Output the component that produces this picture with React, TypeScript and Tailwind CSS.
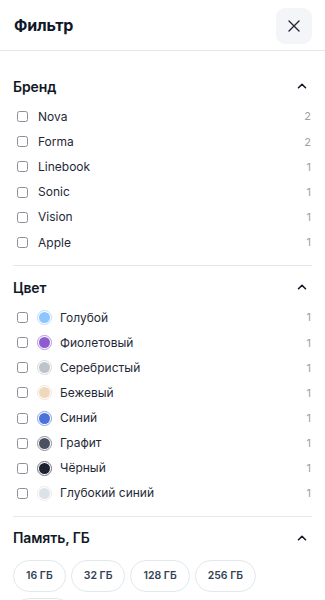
import React from "react";

const brands = [
  { name: "Nova", count: 2 },
  { name: "Forma", count: 2 },
  { name: "Linebook", count: 1 },
  { name: "Sonic", count: 1 },
  { name: "Vision", count: 1 },
  { name: "Apple", count: 1 },
];

const colors = [
  { name: "Голубой", fill: "bg-[#8ec5fc]", ring: "border-[#b9dcfd]" },
  { name: "Фиолетовый", fill: "bg-[#8e5bd0]", ring: "border-[#b594e2]" },
  { name: "Серебристый", fill: "bg-[#bfc4cc]", ring: "border-[#d6d9de]" },
  { name: "Бежевый", fill: "bg-[#eed9bc]", ring: "border-[#f3e5d2]" },
  { name: "Синий", fill: "bg-[#4a72d9]", ring: "border-[#8aa3e6]" },
  { name: "Графит", fill: "bg-[#4b5160]", ring: "border-[#8c909a]" },
  { name: "Чёрный", fill: "bg-[#1d2130]", ring: "border-[#6f7280]" },
  { name: "Глубокий синий", fill: "bg-[#dde1e8]", ring: "border-[#e8ebef]" },
];

const memory = ["16 ГБ", "32 ГБ", "128 ГБ", "256 ГБ", "512 ГБ"];

function Chevron() {
  return (
    <svg width="12" height="12" viewBox="0 0 12 12" fill="none" className="text-[#111827]">
      <path d="M2.5 7.75L6 4.25L9.5 7.75" stroke="currentColor" strokeWidth="1.6" strokeLinecap="round" strokeLinejoin="round" />
    </svg>
  );
}

function Checkbox() {
  return <span className="block w-[11px] h-[11px] rounded-[2.5px] border border-[#8b8f97] bg-white shrink-0" />;
}

function Heading({ title }: { title: string }) {
  return (
    <div className="flex items-center justify-between h-[28px]">
      <span className="text-[14px] font-semibold text-[#111827] tracking-[-0.1px]">{title}</span>
      <span className="mr-[4px]"><Chevron /></span>
    </div>
  );
}

export default function App() {
  return (
    <div
      className="w-[325px] h-[600px] overflow-hidden bg-white"
      style={{ fontFamily: "Inter, 'Noto Sans', sans-serif" }}
    >
      <div className="flex items-center justify-between h-[51px] px-[13px] border-b border-[#e3e8ee]">
        <span className="text-[16px] font-bold text-[#0f172a] tracking-[-0.2px] ml-[1px]">Фильтр</span>
        <button className="w-[36px] h-[36px] rounded-[9px] bg-[#f3f5f8] flex items-center justify-center mt-[1px]">
          <svg width="14" height="14" viewBox="0 0 14 14" fill="none">
            <path d="M2 2L12 12M12 2L2 12" stroke="#1f2937" strokeWidth="1.4" strokeLinecap="round" />
          </svg>
        </button>
      </div>

      <div className="px-[13px]">
        <div className="pt-[21px] pb-[10px] border-b border-[#e3e8ee]">
          <Heading title="Бренд" />
          <div className="mt-[4px]">
            {brands.map((b) => (
              <div key={b.name} className="flex items-center h-[25.2px] pl-[4px]">
                <Checkbox />
                <span className="ml-[10px] text-[12px] text-[#1f2937]">{b.name}</span>
                <span className="ml-auto text-[11px] text-[#9aa1ab] pr-[1px]">{b.count}</span>
              </div>
            ))}
          </div>
        </div>

        <div className="pt-[7px] pb-[10px] border-b border-[#e3e8ee]">
          <Heading title="Цвет" />
          <div className="mt-[4px]">
            {colors.map((c) => (
              <div key={c.name} className="flex items-center h-[25.1px] pl-[4px]">
                <Checkbox />
                <span className={`ml-[9px] w-[15px] h-[15px] rounded-full border ${c.ring} bg-white p-[1px] shrink-0 flex`}>
                  <span className={`block w-full h-full rounded-full ${c.fill}`} />
                </span>
                <span className="ml-[8px] text-[12px] text-[#1f2937]">{c.name}</span>
                <span className="ml-auto text-[11px] text-[#9aa1ab] pr-[1px]">1</span>
              </div>
            ))}
          </div>
        </div>

        <div className="pt-[7px]">
          <Heading title="Память, ГБ" />
          <div className="mt-[8px] flex flex-wrap gap-x-[5px] gap-y-[6px] w-[260px]">
            {memory.map((m) => (
              <span
                key={m}
                className="h-[32px] px-[12px] rounded-full border border-[#e3e8ee] flex items-center text-[10.5px] font-semibold text-[#334155]"
              >
                {m}
              </span>
            ))}
          </div>
        </div>
      </div>
    </div>
  );
}
